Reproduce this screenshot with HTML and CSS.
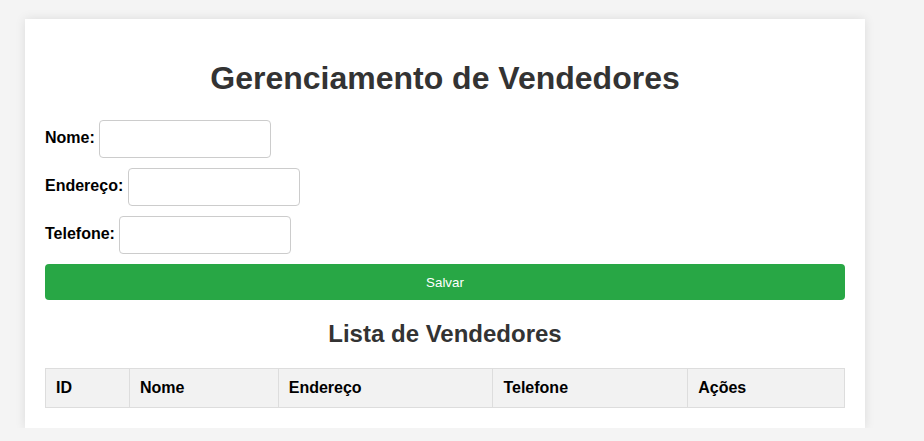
FILE: index.html
```html
<!DOCTYPE html>
<html lang="pt">
<head>
<meta charset="utf-8">
<title>Gerenciamento de Vendedores</title>
<link rel="stylesheet" href="styles.css">
</head>
<body>
<div class="container">
  <h1 class="title">Gerenciamento de Vendedores</h1>
  <form class="form">
    <div class="form-group">
      <label class="label" for="nome">Nome:</label>
      <input class="input" type="text" id="nome">
    </div>
    <div class="form-group">
      <label class="label" for="endereco">Endereço:</label>
      <input class="input" type="text" id="endereco">
    </div>
    <div class="form-group">
      <label class="label" for="telefone">Telefone:</label>
      <input class="input" type="text" id="telefone">
    </div>
    <button class="btn" type="button">Salvar</button>
  </form>
  <h2 class="subtitle">Lista de Vendedores</h2>
  <table class="table">
    <thead>
      <tr>
        <th class="col-id">ID</th>
        <th class="col-nome">Nome</th>
        <th class="col-end">Endereço</th>
        <th class="col-tel">Telefone</th>
        <th class="col-acoes">Ações</th>
      </tr>
    </thead>
    <tbody></tbody>
  </table>
</div>
</body>
</html>
```
FILE: styles.css
```css
html, body {
  margin: 0;
  padding: 0;
}
body {
  background: #f4f4f4;
  font-family: Arial, "Liberation Sans", sans-serif;
  padding: 19px 0 0 25px;
}
.container {
  width: 800px;
  padding: 20px;
  background: #fff;
  box-shadow: 0 0 10px rgba(0, 0, 0, 0.1);
}
.title {
  text-align: center;
  color: #333;
  font-size: 32px;
  margin: 21px 0 23px;
}
.form-group {
  margin-bottom: 10px;
}
.label {
  font-weight: bold;
  font-size: 16px;
  color: #000;
}
.input {
  width: 172px;
  height: 38px;
  box-sizing: border-box;
  padding: 10px;
  border: 1px solid #ccc;
  border-radius: 4px;
  font-family: Arial, "Liberation Sans", sans-serif;
  font-size: 13.33px;
  vertical-align: middle;
}
.btn {
  display: block;
  width: 100%;
  height: 36px;
  background: #28a745;
  color: #fff;
  border: none;
  border-radius: 4px;
  font-family: Arial, "Liberation Sans", sans-serif;
  font-size: 13.33px;
  padding: 0;
}
.subtitle {
  text-align: center;
  color: #333;
  font-size: 24px;
  margin: 20px 0;
}
.table {
  width: 100%;
  border-collapse: collapse;
}
.table th {
  border: 1px solid #ddd;
  background: #f2f2f2;
  padding: 10px;
  text-align: left;
  font-size: 16px;
  font-weight: bold;
  color: #000;
  height: 38px;
  box-sizing: border-box;
}
.col-id { width: 84px; }
.col-nome { width: 149px; }
.col-end { width: 215px; }
.col-tel { width: 195px; }
.col-acoes { width: 157px; }
```
